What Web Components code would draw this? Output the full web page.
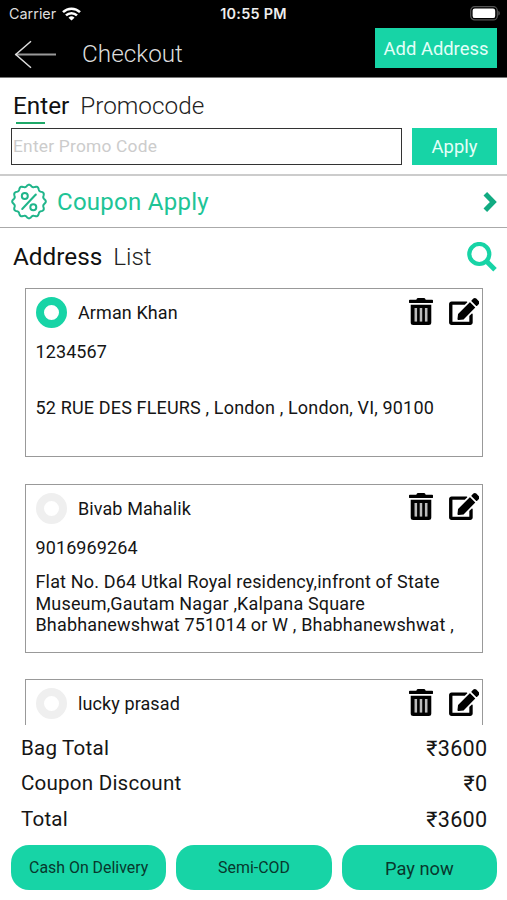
<!DOCTYPE html>
<html lang="en">
<head>
<meta charset="utf-8">
<title>Checkout</title>
<style>
  body {
    margin: 0;
    width: 507px;
    height: 900px;
    overflow: hidden;
    background: #fff;
    color: #151515;
    font-family: Roboto, "Liberation Sans", sans-serif;
    --accent: #17d4a6;
  }
</style>
</head>
<body>
<checkout-page></checkout-page>

<script>
//
// HELPERS
//
const define = (name, html, setup) => {
  const template = document.createElement("template");
  template.innerHTML = html;

  customElements.define(
    name,
    class extends HTMLElement {
      connectedCallback() {
        if (this.shadowRoot) return;
        this.attachShadow({ mode: "open" });
        this.shadowRoot.appendChild(template.content.cloneNode(true));
        setup && setup(this, this.shadowRoot);
      }
    }
  );
};

// wavy outline of the coupon badge
const scallop = (count, radius, depth) => {
  let d = "";
  const steps = count * 12;
  for (let i = 0; i < steps; i++) {
    const a = (i / steps) * Math.PI * 2;
    const r = radius + depth * Math.cos(a * count);
    d += (i ? "L" : "M") + (r * Math.sin(a)).toFixed(2) + " " + (-r * Math.cos(a)).toFixed(2);
  }
  return d + "Z";
};

//
// STATUS BAR
//
define("status-bar", `
  <style>
    :host {
      display: grid;
      grid-template-columns: 1fr auto 1fr;
      align-items: center;
      height: 27px;
      padding: 0 7px 0 7px;
      box-sizing: border-box;
      background: #000;
      color: #ddd;
      font: 14.4px/27px Inter, Roboto, sans-serif;
    }
    svg { display: block; }
    .carrier { display: flex; align-items: center; gap: 6px; padding-left: 2px; }
    .time { font-weight: 600; color: #eee; letter-spacing: .25px; }
    .battery { justify-self: end; }
  </style>
  <div class="carrier">
    <slot name="carrier"></slot>
    <svg width="19" height="14" viewBox="0 0 19 14" fill="none" stroke="#fff" stroke-width="2.5">
      <path d="M1 5.2a12.2 12.2 0 0 1 17 0M4 8.4a7.8 7.8 0 0 1 11 0"/>
      <path d="M9.5 13.6L6.5 10.7a4.3 4.3 0 0 1 6 0z" fill="#fff" stroke="none"/>
    </svg>
  </div>
  <span class="time"><slot name="time"></slot></span>
  <svg class="battery" width="30" height="15" viewBox="0 0 30 15">
    <rect x=".7" y=".7" width="26.6" height="13.2" rx="4" fill="none" stroke="#555" stroke-width="1.2"/>
    <rect x="2.6" y="2.5" width="22.6" height="9.6" rx="2.2" fill="#fff"/>
    <path d="M28.3 5v4.6c1-.3 1.5-1.2 1.5-2.3S29.3 5.3 28.3 5z" fill="#555"/>
  </svg>
`);

//
// HEADER
//
define("page-header", `
  <style>
    :host {
      display: flex;
      align-items: flex-start;
      height: 51px;
      padding: 1px 10px 0 14px;
      box-sizing: border-box;
      background: #000;
      color: #ddd;
      border-bottom: 1px solid #777;
    }
    .back { display: block; margin-top: 12px; }
    .title {
      flex: 1;
      margin-left: 26px;
      font: 300 24.3px/52px Roboto, sans-serif;
    }
  </style>
  <svg class="back" width="42" height="29" viewBox="0 0 42 29" fill="none" stroke-width="1.5">
    <path d="M1.5 14.5H42" stroke="#999" stroke-width="2"/>
    <path d="M17 1.2L1.8 14.5L17 27.8" stroke="#ddd"/>
  </svg>
  <span class="title"><slot></slot></span>
  <slot name="action"></slot>
`);

define("flat-button", `
  <style>
    :host {
      display: flex;
      align-items: center;
      justify-content: center;
      box-sizing: border-box;
      background: var(--accent);
      color: #e4fff8;
      font-size: 18.4px;
      white-space: nowrap;
    }
  </style>
  <slot></slot>
`);

//
// SECTION TITLE
//
define("section-title", `
  <style>
    :host {
      display: flex;
      gap: 11px;
      font-size: 24.3px;
      line-height: 32px;
      color: #111;
    }
    .rest { font-weight: 300; color: #222; }
  </style>
  <span class="lead"><slot name="lead"></slot></span>
  <span class="rest"><slot></slot></span>
`);

//
// PROMO CODE
//
define("promo-form", `
  <style>
    :host {
      display: block;
      height: 98px;
      padding: 12px 10px 0 11px;
      box-sizing: border-box;
      border-bottom: 2px solid #ccc;
    }
    section-title { margin-left: 2px; }
    .underline {
      width: 29px;
      height: 2px;
      margin: 0 0 4px 5px;
      background: #1fa868;
    }
    .row { display: flex; gap: 10px; height: 37px; }
    .field {
      flex: 1;
      box-sizing: border-box;
      border: 1px solid #333;
      padding-left: 1px;
      font-size: 17.4px;
      line-height: 34px;
      letter-spacing: .2px;
      color: #ccc;
    }
    flat-button { width: 85px; }
  </style>
  <section-title><span slot="lead">Enter</span>Promocode</section-title>
  <div class="underline"></div>
  <div class="row">
    <div class="field"><slot></slot></div>
    <flat-button>Apply</flat-button>
  </div>
`);

define("coupon-row", `
  <style>
    :host {
      display: flex;
      align-items: center;
      height: 52px;
      padding: 0 10px 0 11px;
      box-sizing: border-box;
      border-bottom: 1px solid #aaa;
      color: #20c496;
      font-size: 24px;
      line-height: 50px;
    }
    .label { flex: 1; margin-left: 10px; letter-spacing: .27px; }
    svg { display: block; }
  </style>
  <svg width="36" height="37" viewBox="-18 -18.5 36 37" fill="none" stroke="#1fb58a" stroke-width="2" stroke-linecap="round" stroke-linejoin="round">
    <path class="badge"/>
    <circle cx="-4.2" cy="-5.4" r="3"/>
    <circle cx="4.3" cy="5.8" r="3"/>
    <path d="M6.8 -7L-6.8 7.5"/>
  </svg>
  <span class="label"><slot></slot></span>
  <svg width="14" height="20" viewBox="0 0 14 20" fill="none" stroke="#12ab82" stroke-width="5">
    <path d="M2.3 1.8L10.3 10L2.3 18.2"/>
  </svg>
`, (host, root) => {
  root.querySelector(".badge").setAttribute("d", scallop(12, 15.8, 1));
});

//
// ADDRESS LIST
//
define("address-list", `
  <style>
    :host {
      display: flex;
      flex-direction: column;
      height: 497px;
      overflow: hidden;
    }
    .head {
      display: flex;
      align-items: center;
      justify-content: space-between;
      flex: none;
      height: 57px;
      padding: 0 10px 0 13px;
      margin-bottom: 3px;
    }
    .cards {
      display: flex;
      flex-direction: column;
      gap: 26.5px;
      padding: 0 24px 0 25px;
    }
  </style>
  <div class="head">
    <section-title><span slot="lead">Address</span>List</section-title>
    <svg width="30" height="30" viewBox="0 0 30 30" fill="none" stroke="#17d4a6">
      <circle cx="12.3" cy="12" r="10" stroke-width="4.2"/>
      <path d="M19.5 19.2L28 27.7" stroke-width="5"/>
    </svg>
  </div>
  <div class="cards"><slot></slot></div>
`);

define("address-card", `
  <style>
    :host {
      display: block;
      flex: none;
      height: 169px;
      padding: 8px 3px 0 9.5px;
      box-sizing: border-box;
      border: 1px solid #999;
      font-size: 18px;
      letter-spacing: .1px;
    }
    .top { display: flex; align-items: center; height: 31px; }
    .radio {
      width: 31px;
      height: 31px;
      box-sizing: border-box;
      border: 8px solid #efefef;
      border-radius: 50%;
    }
    :host([selected]) .radio { border-color: var(--accent); }
    .name { flex: 1; margin-left: 11.5px; line-height: 29px; }
    svg { display: block; margin-bottom: 3px; }
    .edit { margin-left: 16px; }
    .phone { line-height: 24px; margin-top: 12px; }
    .address {
      display: flex;
      align-items: center;
      height: 65px;
      width: 430px;
      margin-top: 11.5px;
      line-height: 21.7px;
      letter-spacing: .16px;
    }
  </style>
  <div class="top">
    <span class="radio"></span>
    <span class="name"><slot name="name"></slot></span>
    <svg width="24" height="27" viewBox="0 0 448 512" preserveAspectRatio="none">
      <path d="M100 190H348V446H100z" fill="#bbb"/>
      <path fill-rule="evenodd" d="M32 464a48 48 0 0 0 48 48h288a48 48 0 0 0 48-48V128H32zM297 190h47v255h-47zM200 190h47v255h-47zM104 190h47v255h-47zM432 32H312l-9.4-18.7A24 24 0 0 0 281.1 0H166.8a23.7 23.7 0 0 0-21.4 13.3L136 32H16A16 16 0 0 0 0 48v32a16 16 0 0 0 16 16h416a16 16 0 0 0 16-16V48a16 16 0 0 0-16-16z"/>
    </svg>
    <svg class="edit" width="30.5" height="27" viewBox="0 0 576 512">
      <path d="M402.6 83.2l90.2 90.2c3.8 3.8 3.8 10 0 13.8L274.4 405.6l-92.8 10.3c-12.4 1.4-22.9-9.1-21.5-21.5l10.3-92.8L388.8 83.2c3.8-3.8 10-3.8 13.8 0zm162-22.9l-48.8-48.8c-15.2-15.2-39.9-15.2-55.2 0l-35.4 35.4c-3.8 3.8-3.8 10 0 13.8l90.2 90.2c3.8 3.8 10 3.8 13.8 0l35.4-35.4c15.2-15.3 15.2-40 0-55.2zM384 346.2V448H64V128h229.8c3.2 0 6.2-1.3 8.5-3.5l40-40c7.6-7.6 2.2-20.5-8.5-20.5H48C21.5 64 0 85.5 0 112v352c0 26.5 21.5 48 48 48h352c26.5 0 48-21.5 48-48V306.2c0-10.7-12.9-16-20.5-8.5l-40 40c-2.2 2.3-3.5 5.3-3.5 8.5z"/>
    </svg>
  </div>
  <div class="phone"><slot name="phone"></slot></div>
  <div class="address"><div><slot></slot></div></div>
`);

//
// TOTALS + PAYMENT
//
define("total-row", `
  <style>
    :host {
      display: flex;
      justify-content: space-between;
      padding: 0 19.5px 0 21px;
      font-size: 20.6px;
      line-height: 35.3px;
      letter-spacing: .2px;
    }
    .amount { font-size: 21.6px; letter-spacing: .3px; }
  </style>
  <span><slot></slot></span>
  <span class="amount"><slot name="amount"></slot></span>
`);

define("pay-button", `
  <style>
    :host {
      display: flex;
      align-items: center;
      justify-content: center;
      flex: 1;
      height: 45px;
      padding-top: 1px;
      box-sizing: border-box;
      border-radius: 18px;
      background: var(--accent);
      color: #08382d;
      font-size: 15.9px;
    }
    :host([large]) { font-size: 18.3px; padding-top: 2px; }
  </style>
  <slot></slot>
`);

//
// PAGE
//
define("checkout-page", `
  <style>
    :host { display: block; }
    .totals { padding-top: 6px; }
    .payment { display: flex; gap: 10px; padding: 8px 10px 0 11px; }
    page-header flat-button { width: 122px; height: 40px; }
  </style>
  <status-bar>
    <span slot="carrier">Carrier</span>
    <span slot="time">10:55 PM</span>
  </status-bar>
  <page-header>Checkout<flat-button slot="action">Add Address</flat-button></page-header>
  <promo-form>Enter Promo Code</promo-form>
  <coupon-row>Coupon Apply</coupon-row>
  <address-list>
    <address-card selected>
      <span slot="name">Arman Khan</span>
      <span slot="phone">1234567</span>
      52 RUE DES FLEURS , London , London, VI, 90100
    </address-card>
    <address-card>
      <span slot="name">Bivab Mahalik</span>
      <span slot="phone">9016969264</span>
      Flat No. D64 Utkal Royal residency,infront of State<br>Museum,Gautam Nagar ,Kalpana Square<br>Bhabhanewshwat 751014 or W , Bhabhanewshwat ,
    </address-card>
    <address-card>
      <span slot="name">lucky prasad</span>
    </address-card>
  </address-list>
  <div class="totals">
    <total-row>Bag Total<span slot="amount">₹3600</span></total-row>
    <total-row>Coupon Discount<span slot="amount">₹0</span></total-row>
    <total-row>Total<span slot="amount">₹3600</span></total-row>
  </div>
  <div class="payment">
    <pay-button>Cash On Delivery</pay-button>
    <pay-button>Semi-COD</pay-button>
    <pay-button large>Pay now</pay-button>
  </div>
`);
</script>
</body>
</html>
